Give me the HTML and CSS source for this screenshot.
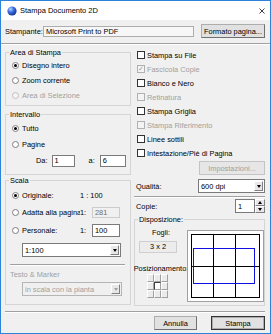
FILE: index.html
```html
<!DOCTYPE html>
<html>
<head>
    <title>Stampa Documento 2D</title>
    <link rel="stylesheet" href="styles.css">
</head>
<body>
    <div class="window">
        <div class="titlebar">
            <svg class="app-icon" width="10" height="10" viewBox="0 0 10 10">
                <defs>
                    <radialGradient id="globe" cx="35%" cy="30%" r="75%">
                        <stop offset="0" stop-color="#b9d3ff"/>
                        <stop offset="0.45" stop-color="#3a6fe0"/>
                        <stop offset="1" stop-color="#142f8c"/>
                    </radialGradient>
                </defs>
                <circle cx="5" cy="5" r="4.6" fill="url(#globe)"/>
            </svg>
            <span class="title">Stampa Documento 2D</span>
            <svg class="close" width="6" height="6" viewBox="0 0 6 6">
                <path d="M0.5 0.5 L5.5 5.5 M5.5 0.5 L0.5 5.5" stroke="#111" stroke-width="0.8"/>
            </svg>
        </div>

        <div class="content">
            <div class="printer-row">
                <span class="printer-label">Stampante:</span>
                <div class="field printer-field">Microsoft Print to PDF</div>
                <button class="btn page-btn">Formato pagina...</button>
            </div>
            <div class="sep sep-full"></div>

            <div class="columns">
                <div class="col-left">
                    <div class="group group-area">
                        <span class="group-title">Area di Stampa</span>
                        <div class="opt"><span class="radio on"></span><span class="opt-text">Disegno intero</span></div>
                        <div class="opt"><span class="radio"></span><span class="opt-text">Zoom corrente</span></div>
                        <div class="opt disabled"><span class="radio"></span><span class="opt-text">Area di Selezione</span></div>
                    </div>

                    <div class="group group-range">
                        <span class="group-title">Intervallo</span>
                        <div class="opt opt-16"><span class="radio on"></span><span class="opt-text">Tutto</span></div>
                        <div class="opt opt-16"><span class="radio"></span><span class="opt-text">Pagine</span></div>
                        <div class="pages-row">
                            <span>Da:</span>
                            <div class="field input from-field">1</div>
                            <span class="to-label">a:</span>
                            <div class="field input to-field">6</div>
                        </div>
                    </div>

                    <div class="group group-scale">
                        <span class="group-title">Scala</span>
                        <div class="opt scale-row h17"><span class="radio on"></span><span class="opt-text scale-label">Originale:</span><span>1 : 100</span></div>
                        <div class="opt scale-row h17"><span class="radio"></span><span class="opt-text scale-label">Adatta alla pagina</span><span class="ratio">1:</span><div class="field input scale-field off">281</div></div>
                        <div class="opt scale-row h18"><span class="radio"></span><span class="opt-text scale-label">Personale:</span><span class="ratio">1:</span><div class="field input scale-field tall">100</div></div>
                        <div class="combo scale-combo">
                            <span class="combo-text">1:100</span>
                            <span class="combo-btn"><i></i></span>
                        </div>
                        <div class="sep sep-inner"></div>
                        <div class="marker-label">Testo &amp; Marker</div>
                        <div class="combo marker-combo off">
                            <span class="combo-text">in scala con la pianta</span>
                            <span class="combo-btn"><i></i></span>
                        </div>
                    </div>
                </div>

                <div class="col-right">
                    <div class="chk-row"><span class="check"></span><span>Stampa su File</span></div>
                    <div class="chk-row disabled"><span class="check checked">&#10003;</span><span>Fascicola Copie</span></div>
                    <div class="chk-row"><span class="check"></span><span>Bianco e Nero</span></div>
                    <div class="chk-row disabled"><span class="check"></span><span>Retinatura</span></div>
                    <div class="chk-row"><span class="check"></span><span>Stampa Griglia</span></div>
                    <div class="chk-row disabled"><span class="check"></span><span>Stampa Riferimento</span></div>
                    <div class="chk-row"><span class="check"></span><span>Linee sottili</span></div>
                    <div class="chk-row"><span class="check"></span><span>Intestazione/Piè di Pagina</span></div>
                    <button class="btn settings-btn" disabled>Impostazioni...</button>

                    <div class="setting-row quality-row">
                        <span>Qualità:</span>
                        <div class="combo quality-combo">
                            <span class="combo-text">600 dpi</span>
                            <span class="combo-btn"><i></i></span>
                        </div>
                    </div>
                    <div class="sep sep-right"></div>
                    <div class="setting-row copies-row">
                        <span>Copie:</span>
                        <div class="spinner">
                            <div class="field input spin-field">1</div>
                            <div class="spin-btns">
                                <span class="spin-up"><i></i></span>
                                <span class="spin-down"><i></i></span>
                            </div>
                        </div>
                    </div>

                    <div class="group group-layout">
                        <span class="group-title">Disposizione:</span>
                        <div class="layout-body">
                            <div class="layout-side">
                                <div class="sheets-label">Fogli:</div>
                                <div class="sheets-box">3 x 2</div>
                                <div class="pos-label">Posizionamento:</div>
                                <div class="pos-grid">
                                    <span></span><span></span><span></span>
                                    <span></span><span class="on"></span><span></span>
                                    <span></span><span></span><span></span>
                                </div>
                            </div>
                            <svg class="preview" width="77" height="72" viewBox="0 0 77 72">
                                <rect x="0.5" y="0.5" width="76" height="71" fill="#fff" stroke="#a0a0a0"/>
                                <g stroke="#000" stroke-width="1">
                                    <path d="M4.5 4 V67.5 M26.5 4 V67.5 M48.5 4 V67.5 M72.5 4 V67.5"/>
                                    <path d="M4 4.5 H73 M4 36.5 H73 M4 67.5 H73"/>
                                </g>
                                <rect x="6.5" y="18.5" width="61" height="35" fill="none" stroke="#1010e0" stroke-width="1"/>
                            </svg>
                        </div>
                    </div>
                </div>
            </div>

            <div class="sep sep-bottom"></div>
            <div class="buttons">
                <button class="btn cancel-btn">Annulla</button>
                <button class="btn print-btn">Stampa</button>
            </div>
        </div>
    </div>
</body>
</html>
```

FILE: styles.css
```css
body {
    margin: 0;
    font-family: "Liberation Sans", Arial, sans-serif;
    font-size: 7.4px;
    color: #000;
    background: #fff;
}
.window {
    width: 271px;
    height: 334px;
    box-sizing: border-box;
    border: 1px solid #2d83d9;
    background: #f0f0f0;
    display: flex;
    flex-direction: column;
    overflow: hidden;
}
.titlebar {
    height: 19px;
    flex: none;
    background: #fff;
    display: flex;
    align-items: center;
    padding-left: 6px;
}
.title {
    margin-left: 3px;
    font-size: 7.5px;
}
.close {
    margin-left: auto;
    margin-right: 5px;
}
.content {
    padding: 0 5px 0 4px;
    display: flex;
    flex-direction: column;
}

/* printer row */
.printer-row {
    margin-top: 4px;
    height: 14px;
    display: flex;
    align-items: center;
}
.printer-label {
    width: 38px;
}
.field {
    box-sizing: border-box;
    border: 1px solid #7a7a7a;
    background: #fff;
    padding-left: 2px;
    display: flex;
    align-items: center;
    white-space: nowrap;
}
.printer-field {
    width: 151px;
    height: 11px;
    border-color: #adadad;
    background: #f7f7f7;
}
.btn {
    box-sizing: border-box;
    height: 14px;
    padding: 0;
    font: inherit;
    color: #000;
    background: #e1e1e1;
    border: 1px solid #adadad;
    border-right-color: #707070;
    border-bottom-color: #707070;
}
.btn:disabled {
    color: #a0a0a0;
    background: #e6e6e6;
    border-color: #c4c4c4;
}
.page-btn {
    margin-left: auto;
    width: 64px;
}

/* separators */
.sep {
    height: 0;
    border-top: 1px solid #a0a0a0;
    border-bottom: 1px solid #fff;
}
.sep-full {
    margin: 5px -5px 0 -4px;
}
.sep-inner {
    margin: 7px 5px 0 4px;
}
.sep-right {
    margin-top: 3px;
}
.sep-bottom {
    margin-top: 5px;
}

.columns {
    display: flex;
    justify-content: space-between;
}
.col-left {
    width: 126px;
    display: flex;
    flex-direction: column;
}
.col-right {
    width: 131px;
    padding-top: 3px;
    display: flex;
    flex-direction: column;
}

/* group boxes */
.group {
    position: relative;
    box-sizing: border-box;
    border: 1px solid #d5d5d5;
}
.group-title {
    position: absolute;
    top: -5px;
    left: 3px;
    padding: 0 1px;
    line-height: 9px;
    background: #f0f0f0;
}
.group-area {
    margin-top: 7px;
    height: 54px;
    padding-top: 5px;
}
.group-range {
    margin-top: 8px;
    height: 61px;
    padding-top: 5px;
}
.group-scale {
    margin-top: 5px;
    height: 125px;
    padding-top: 6px;
}
.disabled {
    color: #a0a0a0;
}

/* radio options */
.opt {
    display: flex;
    align-items: center;
    height: 15px;
    padding-left: 6px;
    white-space: nowrap;
}
.opt-16 {
    height: 16px;
}
.h17 {
    height: 17px;
}
.h18 {
    height: 18px;
}
.radio {
    width: 7px;
    height: 7px;
    box-sizing: border-box;
    border: 1px solid #808080;
    border-radius: 50%;
    background: #fff;
    display: flex;
    align-items: center;
    justify-content: center;
    flex: none;
}
.radio.on::after {
    content: "";
    width: 3px;
    height: 3px;
    border-radius: 50%;
    background: #000;
}
.disabled .radio {
    border-color: #c0c0c0;
    background: #f4f4f4;
}
.opt-text {
    margin-left: 3px;
}

/* page range */
.pages-row {
    height: 17px;
    display: flex;
    align-items: center;
    padding-left: 30px;
}
.input {
    height: 12px;
}
.from-field {
    margin-left: 4px;
    width: 23px;
}
.to-label {
    margin-left: 14px;
}
.to-field {
    margin-left: 5px;
    width: 26px;
}

/* scale */
.scale-label {
    width: 58px;
    overflow: hidden;
    flex: none;
}
.ratio {
    width: 12px;
}
.scale-field {
    width: 28px;
    height: 11px;
}
.scale-field.tall {
    height: 13px;
}
.field.off {
    background: #f0f0f0;
    border-color: #cccccc;
    color: #6d6d6d;
}
.combo {
    box-sizing: border-box;
    height: 14px;
    display: flex;
    align-items: center;
    border: 1px solid #7a7a7a;
    background: #fff;
}
.combo-text {
    flex: 1;
    padding-left: 2px;
    white-space: nowrap;
    overflow: hidden;
}
.combo-btn {
    width: 9px;
    height: 10px;
    margin-right: 1px;
    box-sizing: border-box;
    border: 1px solid #fff;
    border-right-color: #808080;
    border-bottom-color: #808080;
    background: #e8e8e8;
    display: flex;
    align-items: center;
    justify-content: center;
}
.combo-btn i,
.spin-down i {
    border-left: 2.5px solid transparent;
    border-right: 2.5px solid transparent;
    border-top: 3px solid #000;
}
.spin-up i {
    border-left: 2.5px solid transparent;
    border-right: 2.5px solid transparent;
    border-bottom: 3px solid #000;
}
.combo.off {
    background: #f0f0f0;
    border-color: #b5b5b5;
    color: #a0a0a0;
}
.combo.off .combo-btn i {
    border-top-color: #a0a0a0;
}
.scale-combo {
    margin: 4px 0 0 16px;
    width: 99px;
}
.marker-label {
    margin-top: 2px;
    height: 13px;
    line-height: 13px;
    padding-left: 4px;
    color: #a0a0a0;
}
.marker-combo {
    margin: 1px 0 0 16px;
    width: 100px;
}

/* right column */
.chk-row {
    height: 14px;
    display: flex;
    align-items: center;
    padding-left: 3px;
    white-space: nowrap;
}
.check {
    width: 8px;
    height: 8px;
    box-sizing: border-box;
    border: 1px solid #333;
    background: #fff;
    margin-right: 2px;
    flex: none;
    font-size: 7px;
    line-height: 6px;
    text-align: center;
}
.chk-row.disabled .check {
    border-color: #b0b0b0;
    background: #f4f4f4;
    color: #a0a0a0;
}
.settings-btn {
    margin-top: 1px;
    margin-left: auto;
    width: 66px;
}
.setting-row {
    height: 14px;
    display: flex;
    align-items: center;
    padding-left: 2px;
}
.quality-row {
    margin-top: 4px;
}
.quality-combo {
    margin-left: auto;
    width: 67px;
}
.copies-row {
    margin-top: 1px;
}
.spinner {
    margin-left: auto;
    width: 30px;
    height: 14px;
    display: flex;
}
.spin-field {
    width: 20px;
    height: 14px;
}
.spin-btns {
    width: 10px;
    display: flex;
    flex-direction: column;
}
.spin-btns span {
    flex: 1;
    box-sizing: border-box;
    border: 1px solid #fff;
    border-right-color: #808080;
    border-bottom-color: #808080;
    background: #e8e8e8;
    display: flex;
    align-items: center;
    justify-content: center;
}

/* layout group */
.group-layout {
    margin-top: 6px;
    height: 87px;
    padding-top: 10px;
}
.layout-body {
    display: flex;
}
.layout-side {
    width: 52px;
    display: flex;
    flex-direction: column;
}
.sheets-label {
    margin-top: -2px;
    line-height: 9px;
    text-align: center;
}
.sheets-box {
    margin: 4px 0 0 4px;
    width: 38px;
    height: 12px;
    box-sizing: border-box;
    border: 1px solid #cfcfcf;
    background: #ececec;
    text-align: center;
    line-height: 10px;
}
.pos-label {
    margin-top: 11px;
    line-height: 9px;
    white-space: nowrap;
    display: flex;
    justify-content: center;
}
.pos-grid {
    margin: 1px 0 0 12px;
    display: grid;
    grid-template-columns: repeat(3, 7px);
    grid-template-rows: repeat(3, 8px);
}
.pos-grid span {
    box-sizing: border-box;
    border: 1px solid #fff;
    border-right-color: #a0a0a0;
    border-bottom-color: #a0a0a0;
    background: #ebebeb;
}
.pos-grid .on {
    border-left-color: #404040;
    border-top-color: #404040;
    background: #fff;
}

/* bottom buttons */
.buttons {
    margin-top: 3px;
    display: flex;
    justify-content: flex-end;
}
.cancel-btn {
    width: 43px;
}
.print-btn {
    margin-left: 14px;
    width: 54px;
    border: 1px solid #333;
    box-shadow: inset 0 0 0 1px #adadad;
}
```
